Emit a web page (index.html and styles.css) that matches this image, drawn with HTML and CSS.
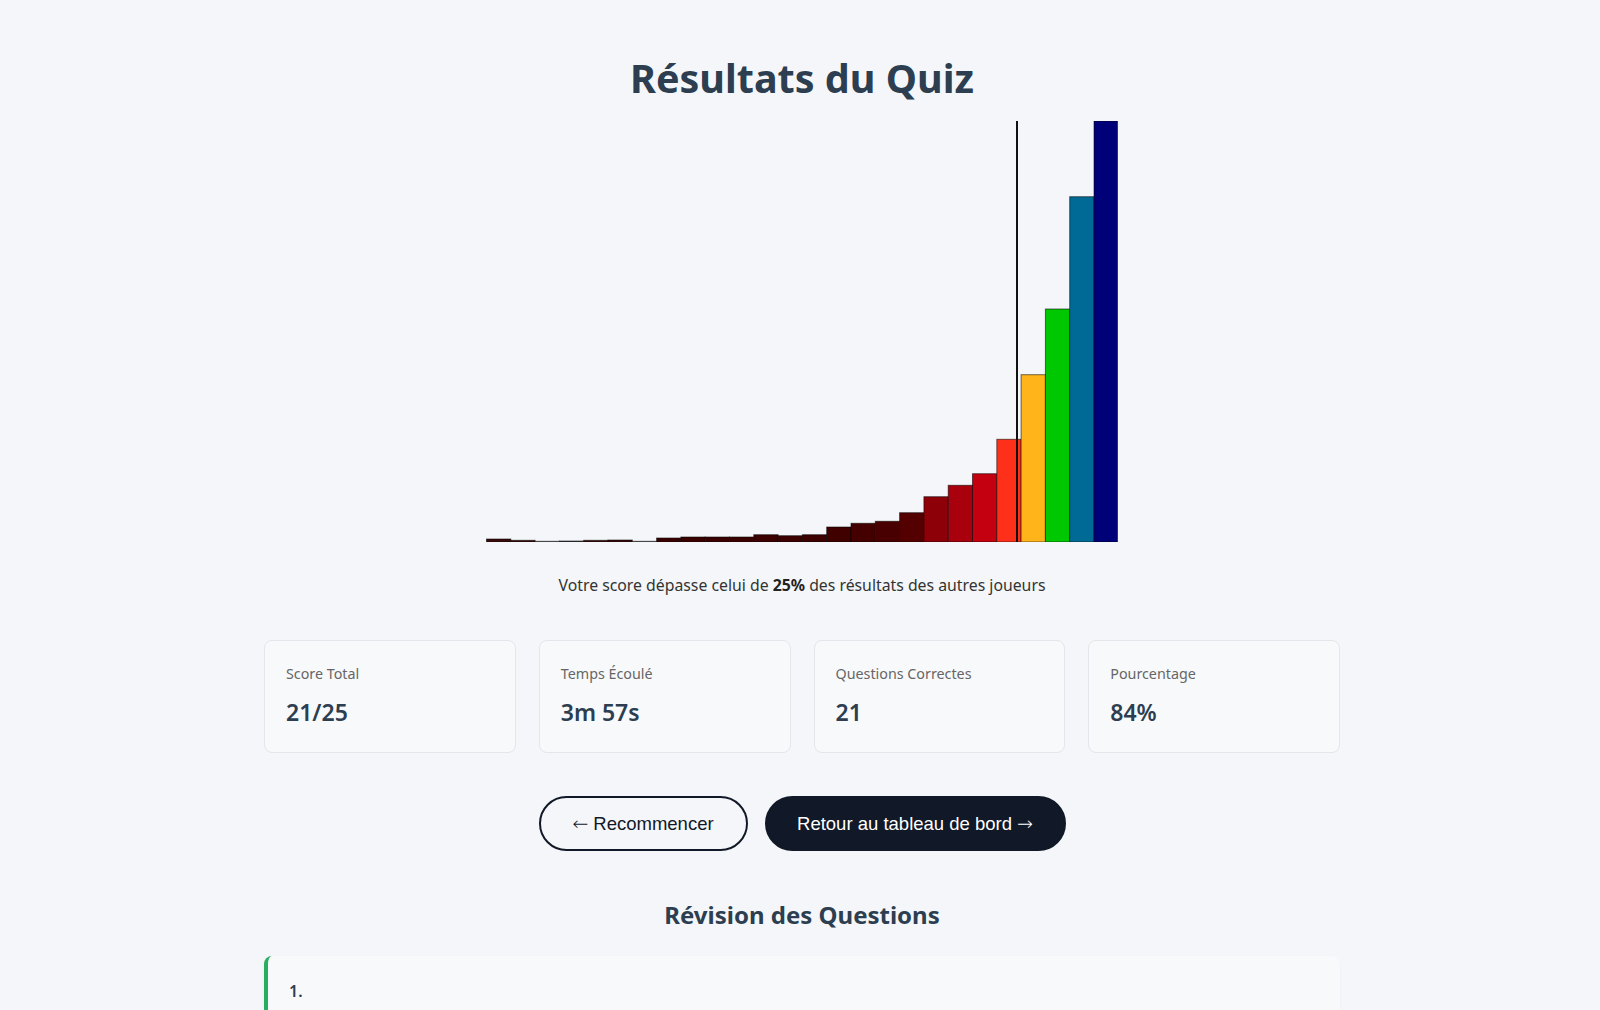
FILE: index.html
```html
<!DOCTYPE html>
<html lang="fr">
<head>
<meta charset="utf-8">
<title>Résultats du Quiz</title>
<link rel="stylesheet" href="styles.css">
</head>
<body>
<main class="page">
  <h1 class="title">Résultats du Quiz</h1>
  <div class="chart">
    <svg width="632" height="421" viewBox="0 0 632 421" xmlns="http://www.w3.org/2000/svg">
      <g stroke="rgba(0,0,0,0.55)" stroke-width="1">
        <rect x="0.5" y="418" width="24.3" height="3" fill="#3d0a0a"/>
        <rect x="24.8" y="419.3" width="24.3" height="1.7" fill="#3d0a0a"/>
        <rect x="49.1" y="420.3" width="24.3" height="0.7" fill="#777"/>
        <rect x="73.4" y="420" width="24.3" height="1" fill="#555"/>
        <rect x="97.7" y="419.3" width="24.3" height="1.7" fill="#3d0a0a"/>
        <rect x="122" y="419" width="24.3" height="2" fill="#3d0a0a"/>
        <rect x="146.3" y="420.3" width="24.3" height="0.7" fill="#777"/>
        <rect x="170.6" y="417" width="24.3" height="4" fill="#3a0000"/>
        <rect x="194.9" y="416" width="24.3" height="5" fill="#3a0000"/>
        <rect x="219.2" y="416" width="24.3" height="5" fill="#3a0000"/>
        <rect x="243.5" y="416" width="24.3" height="5" fill="#3a0000"/>
        <rect x="267.8" y="413.7" width="24.3" height="7.3" fill="#3d0000"/>
        <rect x="292.1" y="414.7" width="24.3" height="6.3" fill="#3d0000"/>
        <rect x="316.4" y="413.7" width="24.3" height="7.3" fill="#3d0000"/>
        <rect x="340.7" y="406" width="24.3" height="15" fill="#400000"/>
        <rect x="365" y="402.3" width="24.3" height="18.7" fill="#440000"/>
        <rect x="389.3" y="400.3" width="24.3" height="20.7" fill="#480000"/>
        <rect x="413.6" y="391.7" width="24.3" height="29.3" fill="#550000"/>
        <rect x="437.9" y="375.7" width="24.3" height="45.3" fill="#8e0008"/>
        <rect x="462.2" y="364.3" width="24.3" height="56.7" fill="#a8000c"/>
        <rect x="486.5" y="352.7" width="24.3" height="68.3" fill="#c40010"/>
        <rect x="510.8" y="318.3" width="24.3" height="102.7" fill="#ff301a"/>
        <rect x="535.1" y="253.7" width="24.3" height="167.3" fill="#ffb41a"/>
        <rect x="559.4" y="188" width="24.3" height="233" fill="#00c800"/>
        <rect x="583.7" y="75.7" width="24.3" height="345.3" fill="#006a96"/>
        <rect x="608" y="0" width="23.5" height="421" fill="#000078"/>
      </g>
      <line x1="531" y1="0" x2="531" y2="421" stroke="#111" stroke-width="2"/>
    </svg>
  </div>
  <p class="subtitle">Votre score dépasse celui de <strong>25%</strong> des résultats des autres joueurs</p>

  <section class="stats">
    <div class="card">
      <div class="card-label">Score Total</div>
      <div class="card-value">21/25</div>
    </div>
    <div class="card">
      <div class="card-label">Temps Écoulé</div>
      <div class="card-value">3m 57s</div>
    </div>
    <div class="card">
      <div class="card-label">Questions Correctes</div>
      <div class="card-value">21</div>
    </div>
    <div class="card">
      <div class="card-label">Pourcentage</div>
      <div class="card-value">84%</div>
    </div>
  </section>

  <div class="actions">
    <button class="btn btn-outline"><span class="arrow">←</span> Recommencer</button>
    <button class="btn btn-dark">Retour au tableau de bord <span class="arrow">→</span></button>
  </div>

  <h2 class="review-title">Révision des Questions</h2>
  <section class="review">
    <div class="question correct">
      <div class="q-num">1.</div>
    </div>
  </section>
</main>
</body>
</html>
```

FILE: styles.css
```css
* { box-sizing: border-box; }
html, body {
  margin: 0;
  padding: 0;
  background: #f4f6f9;
}
body {
  font-family: "Noto Sans", "Open Sans", "DejaVu Sans", sans-serif;
  color: #2c3e50;
  padding-left: 4px;
}
.page {
  width: 1076px;
  margin: 0 auto;
  padding-top: 54px;
  display: flex;
  flex-direction: column;
  align-items: center;
}
.title {
  margin: 0;
  font-size: 39.5px;
  line-height: 48px;
  font-weight: 700;
  color: #2c3e50;
}
.chart {
  margin-top: 19px;
  height: 421px;
  width: 632px;
}
.chart svg { display: block; }
.subtitle {
  margin: 31px 0 0;
  font-size: 15.8px;
  line-height: 24px;
  color: #333;
}
.subtitle strong { font-weight: 700; color: #222; }
.stats {
  margin-top: 43px;
  width: 100%;
  display: grid;
  grid-template-columns: repeat(4, 1fr);
  gap: 23px;
}
.card {
  height: 113px;
  background: #f8f9fb;
  border: 1px solid #e3e6ea;
  border-radius: 8px;
  padding: 22px 20px 20px 21px;
}
.card-label {
  font-size: 14.3px;
  line-height: 22px;
  color: #666;
}
.card-value {
  margin-top: 12px;
  font-size: 23px;
  line-height: 30px;
  font-weight: 600;
  color: #2c3e50;
}
.actions {
  margin-top: 43px;
  display: flex;
  gap: 17px;
}
.btn {
  height: 55px;
  border-radius: 28px;
  font-family: "Liberation Sans", Arial, sans-serif;
  font-size: 18.5px;
  padding: 0 16px;
  cursor: pointer;
  display: flex;
  align-items: center;
  justify-content: center;
  gap: 5px;
}
.arrow {
  font-family: "DejaVu Sans", sans-serif;
  font-size: 19px;
  font-weight: 300;
  line-height: 1;
}
.btn-outline {
  width: 209px;
  background: transparent;
  border: 2px solid #111827;
  color: #111827;
}
.btn-dark {
  width: 301px;
  background: #111827;
  border: 2px solid #111827;
  color: #fff;
}
.review-title {
  margin: 48px 0 0;
  font-size: 24px;
  line-height: 32px;
  font-weight: 700;
  color: #2c3e50;
}
.review {
  margin-top: 25px;
  width: 100%;
}
.question {
  background: #f8f9fb;
  border-radius: 8px;
  border-left: 4px solid #27ae60;
  padding: 24px 21px;
  min-height: 200px;
  box-shadow: 0 1px 3px rgba(0,0,0,0.04);
}
.q-num {
  font-size: 16px;
  font-weight: 600;
  color: #2c3e50;
}
```
